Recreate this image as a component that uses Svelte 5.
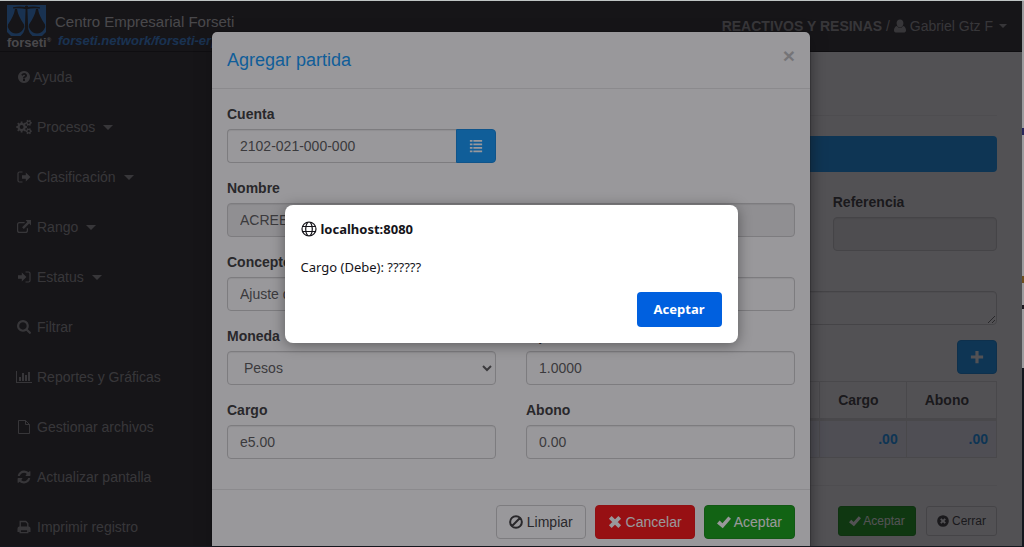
<script lang="ts">
	type Icon = { d?: string; line?: string; width?: number; view?: string };
	type MenuItem = { icon: string; label: string; menu?: boolean };

	function gear(cx: number, cy: number, r: number, teeth: number) {
		const pts: string[] = [];
		const step = (Math.PI * 2) / teeth;
		for (let i = 0; i < teeth; i++) {
			for (const [off, k] of [[-0.3, 0.76], [-0.2, 1], [0.2, 1], [0.3, 0.76]]) {
				const a = (i + off) * step;
				pts.push(`${(cx + Math.cos(a) * r * k).toFixed(2)} ${(cy + Math.sin(a) * r * k).toFixed(2)}`);
			}
		}
		const h = r * 0.36;
		return `M${pts.join('L')}zM${cx - h} ${cy}a${h} ${h} 0 1 0 ${2 * h} 0a${h} ${h} 0 1 0 ${-2 * h} 0z`;
	}

	const ICONS: Record<string, Icon> = {
		help: {
			view: '0 0 1792 1792',
			d: 'M1024 1376v-192q0-14-9-23t-23-9h-192q-14 0-23 9t-9 23v192q0 14 9 23t23 9h192q14 0 23-9t9-23zm256-672q0-88-55.5-163t-138.5-116-170-41q-243 0-371 213-15 24 8 42l132 100q7 6 19 6 16 0 25-12 53-68 86-92 34-24 86-24 48 0 85.5 26t37.5 59q0 38-20 61t-68 45q-63 28-115.5 86.5t-52.5 125.5v36q0 14 9 23t23 9h192q14 0 23-9t9-23q0-19 21.5-49.5t54.5-49.5q32-18 49-28.5t46-35 44.5-48 28-60.5 12.5-81zm384 192q0 209-103 385.5t-279.5 279.5-385.5 103-385.5-103-279.5-279.5-103-385.5 103-385.5 279.5-279.5 385.5-103 385.5 103 279.5 279.5 103 385.5z'
		},
		cogs: { d: gear(5.6, 8, 5.5, 8) + gear(12.7, 3.8, 3.2, 6) + gear(12.7, 12.2, 3.2, 6) },
		signout: {
			d: 'M6 6.2h3.8V3.4L14.4 8l-4.6 4.6V9.8H6z',
			line: 'M6.5 3H3.5Q2 3 2 4.5v7Q2 13 3.5 13h3',
			width: 1.2
		},
		external: {
			d: 'M9.6 1H15v5.4l-1.8-1.8-5.4 5.4-1.7-1.7 5.3-5.4z',
			line: 'M8.6 3.6H3.6Q1.6 3.6 1.6 5.6v5.8q0 2 2 2h5.8q2 0 2-2V9.2',
			width: 1.2
		},
		signin: {
			d: 'M2 6.2h3.8V3.4L10.4 8l-4.6 4.6V9.8H2z',
			line: 'M9.5 3h3Q14 3 14 4.5v7Q14 13 12.5 13h-3',
			width: 1.2
		},
		search: {
			view: '-64 0 1920 1920',
			d: 'M1216 832q0-185-131.5-316.5t-316.5-131.5-316.5 131.5-131.5 316.5 131.5 316.5 316.5 131.5 316.5-131.5 131.5-316.5zm512 832q0 52-38 90t-90 38q-54 0-90-38l-343-342q-179 124-399 124-143 0-273.5-55.5t-225-150-150-225-55.5-273.5 55.5-273.5 150-225 225-150 273.5-55.5 273.5 55.5 225 150 150 225 55.5 273.5q0 220-124 399l343 343q37 37 37 90z'
		},
		chart: { d: 'M0 2h1v11h15v1H0zM3 8h2v4H3zM6 4h2v8H6zM9 6h2v6H9zM12 3h2v9h-2z' },
		file: { line: 'M2.5 1.5h7l4 4v9h-11zM9.5 1.5v4h4', width: 1 },
		refresh: {
			view: '-64 -64 1920 1920',
			d: 'M1639 1056q0 5-1 7-64 268-268 434.5t-478 166.5q-146 0-282.5-55t-243.5-157l-129 129q-19 19-45 19t-45-19-19-45v-448q0-26 19-45t45-19h448q26 0 45 19t19 45-19 45l-137 137q71 66 161 102t187 36q134 0 250-65t186-179q11-17 53-117 8-23 30-23h192q13 0 22.5 9.5t9.5 22.5zm25-800v448q0 26-19 45t-45 19h-448q-26 0-45-19t-19-45 19-45l138-138q-148-137-349-137-134 0-250 65t-186 179q-11 17-53 117-8 23-30 23h-199q-13 0-22.5-9.5t-9.5-22.5v-7q65-268 270-434.5t480-166.5q146 0 284 55.5t245 156.5l130-129q19-19 45-19t45 19 19 45z'
		},
		print: {
			d: 'M1.5 9.5Q1.5 7.5 3.5 7.5h9q2 0 2 2V13h-2.3v-2H3.8v2H1.5z',
			line: 'M4.2 8V2.5h5.6l2 2V8M4.2 10.6h7.6v3.1H4.2z',
			width: 1.3
		},
		user: {
			view: '2 1.5 12 13',
			d: 'M8 1.5c2.1 0 3.4 1.5 3.4 3.7C11.4 7.4 10 9.4 8 9.4S4.6 7.4 4.6 5.2C4.6 3 5.9 1.5 8 1.5zM4.9 8C5.7 9.2 6.8 10 8 10s2.3-.8 3.1-2c2 .5 2.9 2.4 2.9 4.6 0 1.1-.7 1.9-1.7 1.9H3.7c-1 0-1.7-.8-1.7-1.9C2 10.4 2.9 8.5 4.9 8z'
		},
		list: { d: 'M1 1h3v2H1zM5 1h10v2H5zM1 5h3v2H1zM5 5h10v2H5zM1 9h3v2H1zM5 9h10v2H5zM1 13h3v2H1zM5 13h10v2H5z' },
		plus: { d: 'M6.2 1h3.6v5.2H15v3.6H9.8V15H6.2V9.8H1V6.2h5.2z' },
		ban: { line: 'M14.7 8A6.7 6.7 0 1 1 1.3 8a6.7 6.7 0 0 1 13.4 0zM3.5 12.5l9-9', width: 2.3 },
		remove: { line: 'M2.6 2.6l10.8 10.8M13.4 2.6L2.6 13.4', width: 4.4 },
		ok: { d: 'M0 9.6l3-3.2 3.2 2.9L13 1.6l3 2.6L6.6 15z' },
		removecircle: {
			d: 'M8 .2a7.8 7.8 0 1 1 0 15.6A7.8 7.8 0 0 1 8 .2zM5.9 4.2L4.2 5.9 6.2 8l-2 2.1 1.7 1.7L8 9.8l2.1 2 1.7-1.7L9.8 8l2-2.1-1.7-1.7L8 6.2z'
		},
		globe: {
			line: 'M15 8A7 7 0 1 1 1 8a7 7 0 0 1 14 0zM11.3 8c0 4-1.6 7-3.3 7s-3.3-3-3.3-7S6.3 1 8 1s3.3 3 3.3 7zM1.5 5.5h13M1.5 10.5h13',
			width: 1.2
		}
	};

	const MENU: MenuItem[] = [
		{ icon: 'help', label: 'Ayuda' },
		{ icon: 'cogs', label: 'Procesos', menu: true },
		{ icon: 'signout', label: 'Clasificación', menu: true },
		{ icon: 'external', label: 'Rango', menu: true },
		{ icon: 'signin', label: 'Estatus', menu: true },
		{ icon: 'search', label: 'Filtrar' },
		{ icon: 'chart', label: 'Reportes y Gráficas' },
		{ icon: 'file', label: 'Gestionar archivos' },
		{ icon: 'refresh', label: 'Actualizar pantalla' },
		{ icon: 'print', label: 'Imprimir registro' }
	];

	let alertOpen = $state(true);
	let partida = $state({
		cuenta: '2102-021-000-000',
		nombre: 'ACREEDORES DIVERSOS',
		concepto: 'Ajuste de saldo',
		moneda: 'Pesos',
		cambio: '1.0000',
		cargo: 'e5.00',
		abono: '0.00'
	});
</script>

{#snippet icon(name: string)}
	{@const i = ICONS[name]}
	<svg class="icon" viewBox={i.view ?? '0 0 16 16'} aria-hidden="true">
		{#if i.d}<path d={i.d} fill="currentColor" fill-rule="evenodd" />{/if}
		{#if i.line}<path d={i.line} fill="none" stroke="currentColor" stroke-width={i.width} />{/if}
	</svg>
{/snippet}

<div class="desktop">
	<div class="window">
		<header class="navbar">
			<a class="brand" href="#inicio">
				<span class="mark">
					<svg class="scales" viewBox="0 0 39 31" aria-hidden="true">
						<rect width="39" height="31" fill="#2f8df0" />
						<g fill="#222">
							<path d="M18.6 4h1.8l.8 20q.8 4 4.300 7h-12q3.500-3 4.300-7z" />
							<circle cx="19.5" cy="2.4" r="1.8" />
							<path d="M6 2.3q7-1.8 13.5 0 6.500-1.800 13.500 0v1.200q-7-1-13.500.8Q13 2.500 6 3.500z" />
							<path d="M8 4h2q1 7 7 15.5 1 2.500-1 5-2.500 4-7 4t-7-4q-2-2.500-1-5Q7 11 8 4z" />
							<path d="M29 4h2q1 7 7 15.5 1 2.500-1 5-2.500 4-7 4t-7-4q-2-2.500-1-5Q28 11 29 4z" />
							<path d="M0 27l4 4H0zM39 27l-4 4h4z" />
						</g>
					</svg>
					<span class="mark-name">forseti<sup>®</sup></span>
				</span>
				<span class="brand-text">
					<span class="title">Centro Empresarial Forseti</span>
					<em class="site">forseti.network/forseti-erp</em>
				</span>
			</a>
			<button type="button" class="account">
				<span><b>REACTIVOS Y RESINAS</b> / {@render icon('user')} Gabriel Gtz F</span>
				<span class="caret"></span>
			</button>
		</header>

		<div class="page">
			<nav class="sidebar">
				{#each MENU as m (m.label)}
					<a href="#{m.icon}" class:tight={m.icon === 'help'}>
						{@render icon(m.icon)}
						<span>{m.label}</span>
						{#if m.menu}<span class="caret"></span>{/if}
					</a>
				{/each}
			</nav>

			<main class="content">
				<div class="page-head"></div>
				<div class="bar"></div>
				<div class="fields">
					<div class="group ref">
						<label for="referencia">Referencia</label>
						<input id="referencia" class="control" readonly />
					</div>
				</div>
				<textarea class="control" rows="1" aria-label="Concepto de la póliza"></textarea>
				<div class="tools">
					<button type="button" class="btn primary" aria-label="Agregar">{@render icon('plus')}</button>
				</div>
				<table>
					<thead>
						<tr><th class="wide"></th><th>Cargo</th><th>Abono</th></tr>
					</thead>
					<tbody>
						<tr><td></td><td>.00</td><td>.00</td></tr>
					</tbody>
				</table>
				<div class="page-foot">
					<button type="button" class="btn small success">{@render icon('ok')} Aceptar</button>
					<button type="button" class="btn small">{@render icon('removecircle')} Cerrar</button>
				</div>
			</main>
		</div>

		<div class="backdrop">
			<div class="modal" role="dialog" aria-labelledby="modal-title">
				<div class="modal-header">
					<h4 id="modal-title">Agregar partida</h4>
					<button type="button" class="close" aria-label="Cerrar">×</button>
				</div>
				<form class="modal-body">
					<div class="group">
						<label for="cuenta">Cuenta</label>
						<div class="input-group">
							<input id="cuenta" class="control" bind:value={partida.cuenta} />
							<button type="button" class="btn primary" aria-label="Buscar cuenta">{@render icon('list')}</button>
						</div>
					</div>
					<div class="group full">
						<label for="nombre">Nombre</label>
						<input id="nombre" class="control" readonly value={partida.nombre} />
					</div>
					<div class="group full">
						<label for="concepto">Concepto</label>
						<input id="concepto" class="control" bind:value={partida.concepto} />
					</div>
					<div class="group">
						<label for="moneda">Moneda</label>
						<select id="moneda" class="control" bind:value={partida.moneda}>
							<option>Pesos</option>
						</select>
					</div>
					<div class="group">
						<label for="cambio">Tipo de cambio</label>
						<input id="cambio" class="control" bind:value={partida.cambio} />
					</div>
					<div class="group">
						<label for="cargo">Cargo</label>
						<input id="cargo" class="control" bind:value={partida.cargo} />
					</div>
					<div class="group">
						<label for="abono">Abono</label>
						<input id="abono" class="control" bind:value={partida.abono} />
					</div>
				</form>
				<div class="modal-footer">
					<button type="button" class="btn">{@render icon('ban')} Limpiar</button>
					<button type="button" class="btn danger">{@render icon('remove')} Cancelar</button>
					<button type="button" class="btn success">{@render icon('ok')} Aceptar</button>
				</div>
			</div>
		</div>

		{#if alertOpen}
			<div class="prompt-layer">
				<div class="prompt" role="alertdialog" aria-labelledby="prompt-title" aria-describedby="prompt-text">
					<strong>{@render icon('globe')}<span id="prompt-title">localhost:8080</span></strong>
					<p id="prompt-text">Cargo (Debe): ??????</p>
					<button type="button" onclick={() => (alertOpen = false)}>Aceptar</button>
				</div>
			</div>
		{/if}
	</div>
</div>

<style>
	/* the browser window leaves a sliver of the desktop on three sides */
	.desktop {
		height: 100vh;
		padding: 1px 2px 1px 0;
		background: linear-gradient(
			#bfc4c4 1px,
			#9c9c9e 1px 128px,
			#28285c 128px 135px,
			#9c9c9e 135px 276px,
			#6e5020 276px 283px,
			#9c9c9e 283px 305px,
			#1c1a20 305px 309px,
			#9c9c9e 309px 368px,
			#14171e 368px
		);
	}
	.desktop,
	.desktop :global(*) {
		box-sizing: border-box;
	}
	.window {
		position: relative;
		height: 100%;
		overflow: hidden;
		background: #fff;
		color: #333;
		font: 14px/20px 'Liberation Sans', Arial, sans-serif;
	}
	a {
		color: inherit;
		text-decoration: none;
	}
	button,
	input,
	select,
	textarea {
		font: inherit;
	}
	.icon {
		width: 14px;
		height: 14px;
		vertical-align: -2px;
	}
	.caret {
		border: 4px solid transparent;
		border-top-color: currentColor;
		border-bottom: 0;
	}

	/* navbar */
	.navbar {
		display: flex;
		justify-content: space-between;
		align-items: center;
		height: 51px;
		padding: 0 15px 0 7px;
		background: #222;
		border-bottom: 1px solid #080808;
		color: #9d9d9d;
	}
	.brand {
		display: flex;
		gap: 8px;
		white-space: nowrap;
	}
	.mark {
		display: flex;
		flex-direction: column;
		width: 40px;
		padding-top: 3px;
	}
	.scales {
		width: 39px;
		height: 31px;
	}
	.mark-name {
		font: bold 13px/14px 'Liberation Sans', Arial, sans-serif;
		color: #ddd;
	}
	.mark-name sup {
		font-size: 6px;
		line-height: 1;
	}
	.brand-text {
		display: flex;
		flex-direction: column;
		padding-top: 10px;
	}
	.title {
		font: 15px/20px 'Liberation Sans', Arial, sans-serif;
		color: #ddd;
	}
	.site {
		padding-left: 3px;
		font-size: 13px;
		font-weight: bold;
		line-height: 18px;
		color: #2f8df0;
	}
	.account {
		display: flex;
		align-items: center;
		gap: 6px;
		padding: 0;
		border: 0;
		background: none;
		color: inherit;
	}
	.account .icon {
		width: 12px;
	}

	/* page */
	.page {
		display: flex;
	}
	.sidebar {
		flex: 0 0 225px;
		background: #222;
		color: #9d9d9d;
	}
	.sidebar a {
		display: flex;
		align-items: center;
		gap: 5px;
		height: 50px;
		padding-left: 16px;
	}
	.sidebar .tight {
		gap: 1px;
	}
	.sidebar .icon {
		width: 16px;
		height: 16px;
	}
	.sidebar .tight .icon {
		height: 14px;
	}
	.sidebar .caret {
		margin-left: 3px;
		border-width: 5px 5px 0;
	}
	.content {
		flex: 1;
		padding: 0 25px;
	}
	.page-head {
		height: 64px;
		margin-bottom: 20px;
		border-bottom: 1px solid #eee;
	}
	.bar {
		height: 36px;
		border-radius: 4px;
		background: #0696fc;
	}
	.fields {
		display: grid;
		grid-template-columns: repeat(4, 1fr);
		gap: 30px;
		margin: 20px 0 40px;
	}
	.ref {
		grid-column: 4;
	}
	.tools {
		display: flex;
		justify-content: flex-end;
		margin: 15px 0 7px;
	}
	table {
		width: 100%;
		border-collapse: collapse;
	}
	th,
	td {
		height: 38px;
		padding: 8px;
		border: 1px solid #ddd;
	}
	th {
		padding: 8px 27px 8px 18px;
		border-bottom-width: 3px;
		text-align: left;
	}
	.wide {
		width: 100%;
	}
	td {
		background: #f0f2ff;
		color: #0696fc;
		font-weight: bold;
		text-align: right;
	}
	.page-foot {
		display: flex;
		justify-content: flex-end;
		gap: 10px;
		margin-top: 27px;
		padding: 20px 0;
		border-top: 1px solid #eee;
	}

	/* forms */
	label {
		display: block;
		margin-bottom: 5px;
		font-weight: bold;
	}
	.control {
		display: block;
		width: 100%;
		height: 34px;
		padding: 6px 12px;
		border: 1px solid #ccc;
		border-radius: 4px;
		background: #fff;
		box-shadow: inset 0 1px 1px rgba(0, 0, 0, 0.075);
		color: #555;
	}
	.control[readonly] {
		background: #eee;
	}
	.input-group {
		display: flex;
	}
	.input-group .control {
		border-right: 0;
		border-radius: 4px 0 0 4px;
	}
	.input-group .btn {
		border-radius: 0 4px 4px 0;
	}
	.btn {
		height: 34px;
		padding: 0 12px;
		border: 1px solid #ccc;
		border-radius: 4px;
		background: #fff;
		color: #333;
		white-space: nowrap;
	}
	.btn.small {
		height: 30px;
		padding: 0 10px;
		border-radius: 3px;
		font-size: 12px;
	}
	.small .icon {
		width: 12px;
		height: 12px;
	}
	.btn.primary {
		border-color: #0684e0;
		background: #0696fc;
		color: #fff;
	}
	.btn.success {
		border-color: #0a8a0a;
		background: #0a9f0a;
		color: #fff;
	}
	.btn.danger {
		border-color: #f00808;
		background: #fb0808;
		color: #fff;
	}

	/* modal */
	.backdrop {
		position: absolute;
		inset: 0;
		background: rgba(0, 0, 0, 0.5);
	}
	.modal {
		max-width: 600px;
		margin: 30px auto;
		border: 1px solid rgba(0, 0, 0, 0.2);
		border-radius: 6px;
		background: #fff;
		background-clip: padding-box;
		box-shadow: 0 5px 15px rgba(0, 0, 0, 0.5);
	}
	.modal-header {
		display: flex;
		justify-content: space-between;
		align-items: flex-start;
		padding: 15px;
		border-bottom: 1px solid #e5e5e5;
	}
	h4 {
		margin: 0;
		font-size: 18px;
		font-weight: normal;
		line-height: 26px;
		color: #0696fc;
	}
	.close {
		padding: 0;
		border: 0;
		background: none;
		color: #000;
		font-size: 21px;
		font-weight: bold;
		line-height: 18px;
		opacity: 0.25;
	}
	.modal-body {
		display: grid;
		grid-template-columns: 1fr 1fr;
		gap: 15px 30px;
		padding: 15px 15px 30px;
	}
	.full {
		grid-column: 1 / -1;
	}
	.modal-footer {
		display: flex;
		justify-content: flex-end;
		gap: 9px;
		padding: 15px;
		border-top: 1px solid #e5e5e5;
	}

	/* browser prompt */
	.prompt-layer {
		position: absolute;
		inset: 0;
		display: flex;
		justify-content: center;
		align-items: center;
		background: rgba(28, 27, 34, 0.45);
	}
	.prompt {
		display: flex;
		flex-direction: column;
		width: 100%;
		max-width: 453px;
		padding: 15px 16px 16px;
		border-radius: 8px;
		background: #fff;
		box-shadow: 0 2px 14px rgba(0, 0, 0, 0.4);
		color: #15141a;
		font: 13px/18px 'Noto Sans', sans-serif;
	}
	.prompt strong {
		display: flex;
		align-items: center;
		gap: 4px;
	}
	.prompt .icon {
		width: 16px;
		height: 16px;
	}
	.prompt p {
		margin: 20px 0 16px;
	}
	.prompt button {
		align-self: flex-end;
		height: 35px;
		padding: 0 17px;
		border: 0;
		border-radius: 4px;
		background: #0060df;
		color: #fff;
		font-weight: bold;
	}
</style>
